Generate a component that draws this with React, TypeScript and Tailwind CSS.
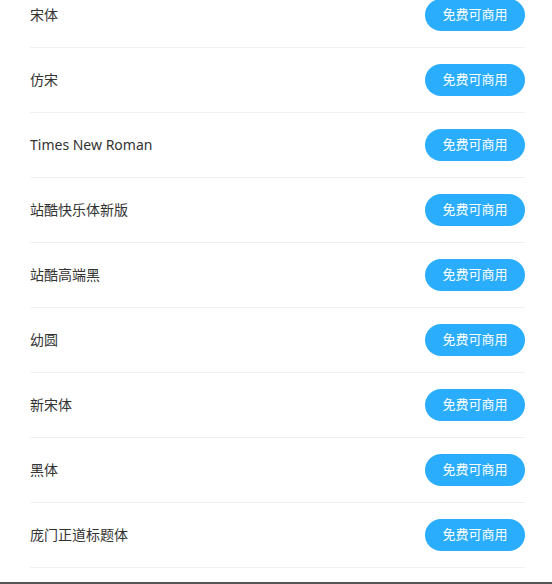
const fonts = [
  "宋体",
  "仿宋",
  "Times New Roman",
  "站酷快乐体新版",
  "站酷高端黑",
  "幼圆",
  "新宋体",
  "黑体",
  "庞门正道标题体",
];

export default function App() {
  return (
    <div
      className="h-[584px] overflow-hidden bg-white"
      style={{ fontFamily: '"Noto Sans", "Noto Sans CJK SC", sans-serif' }}
    >
      <ul className="-mt-[17px] ml-[30px] mr-[27px]">
        {fonts.map((name) => (
          <li
            key={name}
            className="flex h-[65px] items-center justify-between border-b border-[#f0f0f0]"
          >
            <span className="pb-[2px] text-[14px] text-[#333]">{name}</span>
            <button className="h-[32px] w-[100px] rounded-full bg-[#2badfd] text-[13px] text-white">
              免费可商用
            </button>
          </li>
        ))}
      </ul>
      <div className="mt-[14px] h-[10px] bg-[#555]" />
    </div>
  );
}
